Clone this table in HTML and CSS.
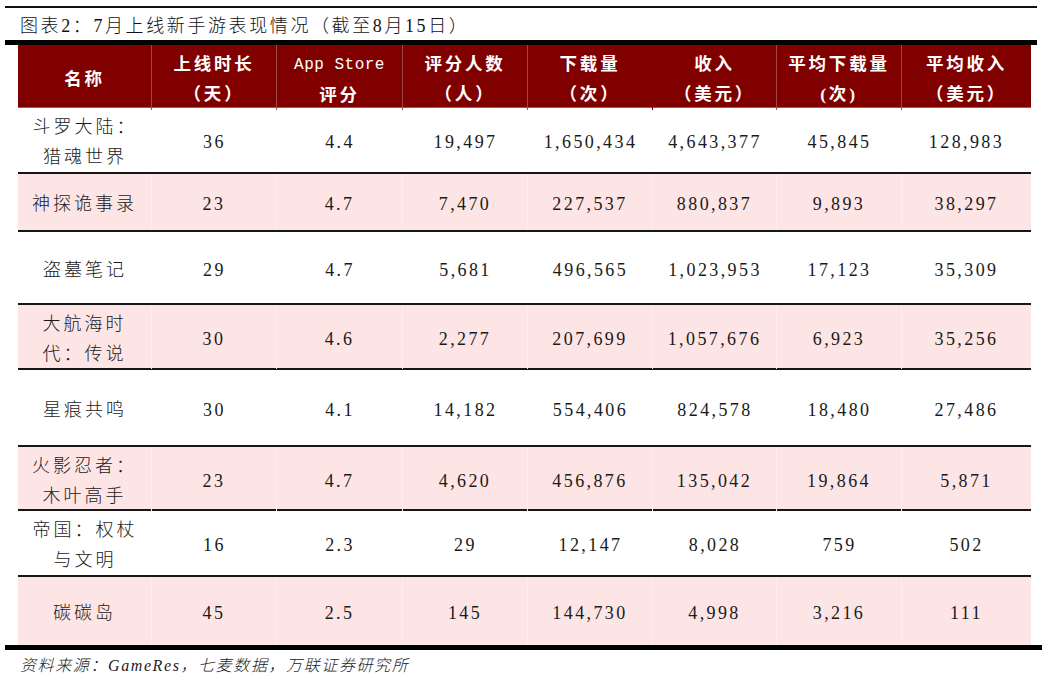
FILE: index.html
```html
<!DOCTYPE html>
<html lang="zh-CN">
<head>
<meta charset="utf-8">
<title>图表2：7月上线新手游表现情况</title>
<link rel="stylesheet" href="styles.css">
</head>
<body>
<div class="page">
  <div class="rule-top"></div>
  <div class="title">图表2：7月上线新手游表现情况（截至8月15日）</div>
  <div class="rule-thick"></div>
  <div class="table">
    <div class="row head">
      <div class="c"><span class="t">名称</span></div>
      <div class="c"><span class="t">上线时长<br>（天）</span></div>
      <div class="c"><span class="t"><span class="latin">App Store</span><br>评分</span></div>
      <div class="c"><span class="t">评分人数<br>（人）</span></div>
      <div class="c nodiv"><span class="t">下载量<br>（次）</span></div>
      <div class="c"><span class="t">收入<br>（美元）</span></div>
      <div class="c"><span class="t">平均下载量<br>(次)</span></div>
      <div class="c"><span class="t">平均收入<br>（美元）</span></div>
    </div>
    <div class="row r1">
      <div class="c name"><span class="t">斗罗大陆：<br>猎魂世界</span></div>
      <div class="c num">36</div><div class="c num">4.4</div><div class="c num">19,497</div><div class="c num">1,650,434</div><div class="c num">4,643,377</div><div class="c num">45,845</div><div class="c num">128,983</div>
    </div>
    <div class="row r2 pink">
      <div class="c name"><span class="t">神探诡事录</span></div>
      <div class="c num">23</div><div class="c num">4.7</div><div class="c num">7,470</div><div class="c num">227,537</div><div class="c num">880,837</div><div class="c num">9,893</div><div class="c num">38,297</div>
    </div>
    <div class="row r3">
      <div class="c name"><span class="t">盗墓笔记</span></div>
      <div class="c num">29</div><div class="c num">4.7</div><div class="c num">5,681</div><div class="c num">496,565</div><div class="c num">1,023,953</div><div class="c num">17,123</div><div class="c num">35,309</div>
    </div>
    <div class="row r4 pink">
      <div class="c name"><span class="t">大航海时<br>代：传说</span></div>
      <div class="c num">30</div><div class="c num">4.6</div><div class="c num">2,277</div><div class="c num">207,699</div><div class="c num">1,057,676</div><div class="c num">6,923</div><div class="c num">35,256</div>
    </div>
    <div class="row r5">
      <div class="c name"><span class="t">星痕共鸣</span></div>
      <div class="c num">30</div><div class="c num">4.1</div><div class="c num">14,182</div><div class="c num">554,406</div><div class="c num">824,578</div><div class="c num">18,480</div><div class="c num">27,486</div>
    </div>
    <div class="row r6 pink">
      <div class="c name"><span class="t">火影忍者：<br>木叶高手</span></div>
      <div class="c num">23</div><div class="c num">4.7</div><div class="c num">4,620</div><div class="c num">456,876</div><div class="c num">135,042</div><div class="c num">19,864</div><div class="c num">5,871</div>
    </div>
    <div class="row r7">
      <div class="c name"><span class="t">帝国：权杖<br>与文明</span></div>
      <div class="c num">16</div><div class="c num">2.3</div><div class="c num">29</div><div class="c num">12,147</div><div class="c num">8,028</div><div class="c num">759</div><div class="c num">502</div>
    </div>
    <div class="row r8 pink last">
      <div class="c name"><span class="t">碳碳岛</span></div>
      <div class="c num">45</div><div class="c num">2.5</div><div class="c num">145</div><div class="c num">144,730</div><div class="c num">4,998</div><div class="c num">3,216</div><div class="c num">111</div>
    </div>
  </div>
  <div class="rule-bottom"></div>
  <div class="source">资料来源：GameRes，七麦数据，万联证券研究所</div>
</div>
</body>
</html>
```
FILE: styles.css
```css
html, body {
  margin: 0;
  padding: 0;
  background: #ffffff;
}

.page {
  width: 1047px;
  height: 679px;
  padding-left: 5px;
  box-sizing: border-box;
  font-family: "Liberation Serif", "Noto Sans CJK SC", serif;
  color: #1a1a1a;
}

.rule-top {
  margin-top: 6px;
  width: 1032px;
  height: 2px;
  background: #111;
}

.title {
  height: 32px;
  box-sizing: border-box;
  padding-top: 4px;
  line-height: 28px;
  padding-left: 15px;
  font-size: 18px;
  letter-spacing: 2.6px;
  font-weight: 300;
  color: #111;
}

.rule-thick {
  width: 1032px;
  height: 5px;
  background: #000;
}

.table {
  margin-left: 13px;
  width: 1013px;
}

.row {
  display: grid;
  grid-template-columns: 134px 125px 126px 125px 125px 124px 125px 129px;
  box-sizing: border-box;
  border-bottom: 2px solid #161616;
}

.row.last {
  border-bottom: none;
}

.c {
  display: flex;
  align-items: center;
  justify-content: center;
  text-align: center;
  line-height: 30px;
  font-size: 18px;
  box-sizing: border-box;
  padding-top: 4px;
}

.t {
  display: block;
}

.head {
  height: 63px;
  background: #800000;
  color: #ffffff;
  border-bottom: 1px solid #6e6e6e;
}

.head .c {
  font-weight: 700;
  letter-spacing: 2.8px;
  font-size: 17.5px;
  padding-top: 3px;
  border-right: 1px solid #a04848;
}

.head .c:last-child {
  border-right: none;
}

.head .c.nodiv {
  border-right-color: #800000;
}

.head .latin {
  font-family: "Liberation Mono", monospace;
  font-weight: 400;
  font-size: 16px;
  letter-spacing: 0.5px;
}

.pink {
  background: #fde5e6;
}

.pink .c {
  border-right: 1px solid #fdeeee;
}

.pink .c:last-child {
  border-right: none;
}

.name {
  font-weight: 300;
  letter-spacing: 3px;
  color: #1a1a1a;
}

.num {
  letter-spacing: 2.4px;
  color: #1a1a1a;
}

.r1 { height: 66px; }
.r2 { height: 58px; }
.r3 { height: 73px; }
.r4 { height: 65px; }
.r5 { height: 77px; }
.r6 { height: 64px; }
.r7 { height: 66px; }
.r8 { height: 68px; }

.rule-bottom {
  width: 1037px;
  height: 5px;
  background: #000;
}

.source {
  height: 29px;
  box-sizing: border-box;
  padding-top: 3px;
  line-height: 26px;
  padding-left: 15px;
  font-size: 16px;
  font-style: italic;
  font-weight: 300;
  letter-spacing: 1.6px;
  color: #222;
}
```
